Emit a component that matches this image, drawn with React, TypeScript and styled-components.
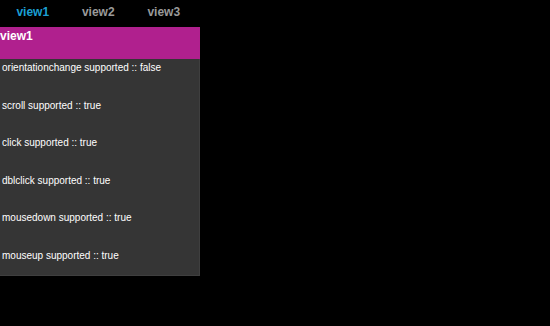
import React from 'react';
import styled, { createGlobalStyle } from 'styled-components';

const events = [
  { name: 'orientationchange', supported: false },
  { name: 'scroll', supported: true },
  { name: 'click', supported: true },
  { name: 'dblclick', supported: true },
  { name: 'mousedown', supported: true },
  { name: 'mouseup', supported: true },
];

const tabs = ['view1', 'view2', 'view3'];

const App: React.FC = () => {
  return (
    <>
      <GlobalStyle />
      <Page>
        <TabBar>
          {tabs.map((tab, i) => (
            <Tab key={tab} active={i === 0}>
              {tab}
            </Tab>
          ))}
        </TabBar>
        <View>
          <Header>view1</Header>
          <List>
            {events.map((ev) => (
              <Item key={ev.name}>
                {ev.name} supported :: {String(ev.supported)}
              </Item>
            ))}
          </List>
        </View>
      </Page>
    </>
  );
};

const GlobalStyle = createGlobalStyle`
  html, body {
    margin: 0;
    padding: 0;
    background: #000;
    font-family: 'Liberation Sans', Arial, sans-serif;
  }
`;

const Page = styled.div`
  width: 550px;
  height: 326px;
  background: #000;
  overflow: hidden;
`;

const TabBar = styled.div`
  display: flex;
  height: 27px;
  align-items: flex-start;
  padding-top: 5px;
  box-sizing: border-box;
`;

const Tab = styled.div<{ active?: boolean }>`
  width: 65.5px;
  text-align: center;
  font-size: 12px;
  font-weight: bold;
  line-height: 15px;
  color: ${(p) => (p.active ? '#1b9fd3' : '#9a9a9a')};
`;

const View = styled.div`
  width: 200px;
`;

const Header = styled.div`
  height: 32px;
  background: #b0208e;
  color: #fff;
  font-size: 12px;
  font-weight: bold;
  line-height: 16px;
  padding-top: 1px;
  box-sizing: border-box;
`;

const List = styled.div`
  height: 217px;
  background: #353535;
  border-right: 1px solid #3f3f3f;
  border-bottom: 1px solid #3f3f3f;
  box-sizing: border-box;
  padding-top: 2px;
`;

const Item = styled.div`
  height: 37.5px;
  color: #fff;
  font-size: 10px;
  line-height: 13px;
  padding-left: 2px;
`;

export default App;
